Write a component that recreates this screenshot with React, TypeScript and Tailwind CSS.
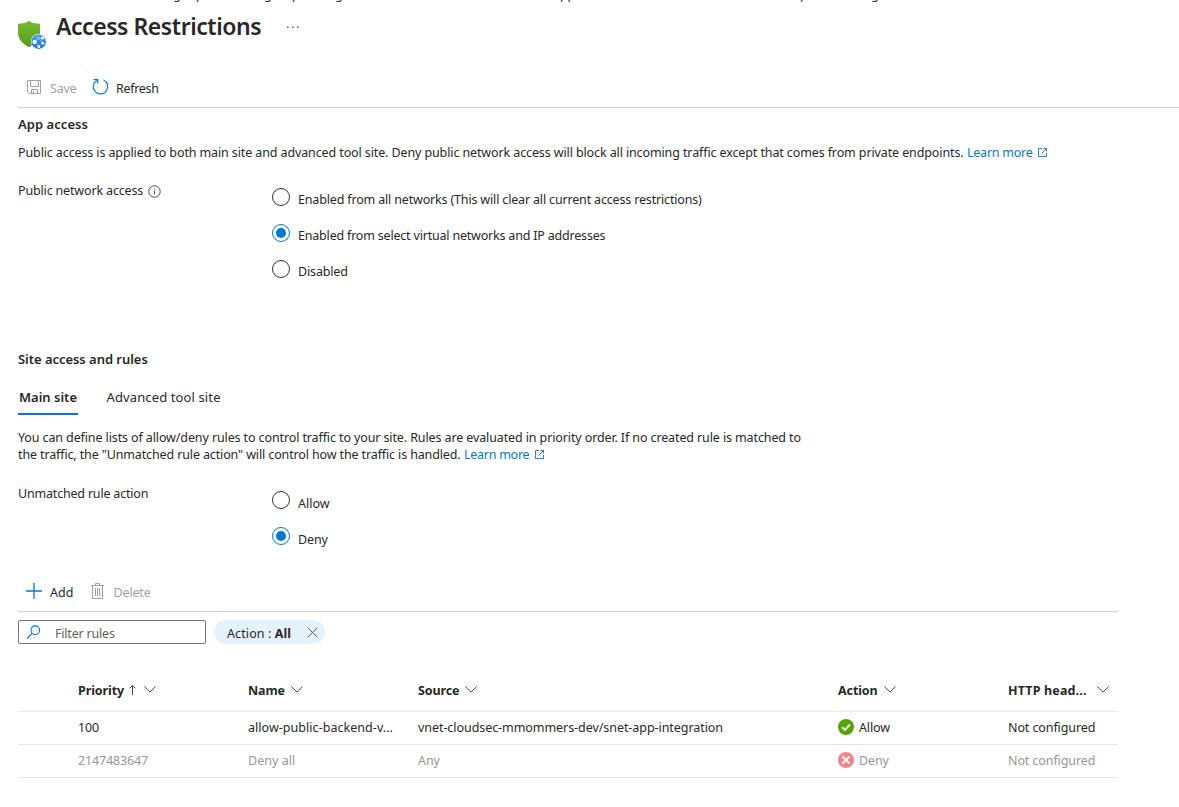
import clsx from "clsx";

const ShieldIcon = () => (
  <svg width="30" height="30" viewBox="0 0 30 30" className="shrink-0">
    <defs>
      <linearGradient id="shield" x1="0" y1="0" x2="0" y2="1">
        <stop offset="0" stopColor="#76bc2d" />
        <stop offset="1" stopColor="#5a9a22" />
      </linearGradient>
      <linearGradient id="globe" x1="0" y1="0" x2="0" y2="1">
        <stop offset="0" stopColor="#4a9de9" />
        <stop offset="1" stopColor="#1673cd" />
      </linearGradient>
    </defs>
    <path d="M11 .8C13.500 3 17.500 3.800 22 3.800V13C22 19.500 16.500 24.500 11 27.200C5.500 24.500 0 19.500 0 13V3.800C4.500 3.800 8.500 3 11 .8Z" fill="url(#shield)" />
    <circle cx="20.700" cy="21.700" r="7.700" fill="#fff" />
    <circle cx="20.700" cy="21.700" r="7.200" fill="url(#globe)" />
    <path d="M16.500 21.500L20.700 18.500L25.500 23M20.500 18.500L24.500 18M17 22.500L21.500 26.500" stroke="#a9d3f8" strokeWidth=".8" fill="none" />
    <circle cx="16.600" cy="21.900" r="2.100" fill="#fff" />
    <circle cx="24.600" cy="18" r="1.500" fill="#fff" />
    <circle cx="20" cy="17.800" r="1.200" fill="#8cc4f5" />
    <circle cx="24.700" cy="23.300" r="1.400" fill="#fff" />
    <circle cx="20.800" cy="26.400" r="1.500" fill="#fff" />
  </svg>
);

const SaveIcon = () => (
  <svg width="14" height="14" viewBox="0 0 14 14" fill="none" stroke="#a19f9d">
    <path d="M.5 .5H13.500V13.500H2.500L.5 11.500Z" />
    <path d="M3.500 .5V6.500H11.500V.5M4.500 13.500V9.500H10.500V13.500M6.500 11V13.500" />
  </svg>
);

const RefreshIcon = () => (
  <svg width="17" height="17" viewBox="0 0 18 18" fill="none" stroke="#0078d4" strokeWidth="1.200">
    <path d="M12.300 2.200A7.700 7.700 0 1 1 5.200 2.400" />
    <path d="M1.800 1.600H6V5.800" />
  </svg>
);

const InfoIcon = () => (
  <svg width="13" height="13" viewBox="0 0 13 13" fill="none" stroke="#484644">
    <circle cx="6.500" cy="6.500" r="5.700" strokeWidth="1" />
    <path d="M6.500 5.500V9.500M6.500 3.500V4.500" />
  </svg>
);

const ExternalIcon = () => (
  <svg width="9" height="9" viewBox="0 0 9 9" fill="none" stroke="#0078d4" className="shrink-0">
    <path d="M4 .5H.5V8.500H8.500V5M5.500 .5H8.500V3.500M8.500 .5L3.500 5.500" strokeWidth=".9" />
  </svg>
);

const PlusIcon = () => (
  <svg width="16" height="16" viewBox="0 0 16 16" stroke="#0078d4" strokeWidth="1.300">
    <path d="M8 0V16M0 8H16" />
  </svg>
);

const TrashIcon = () => (
  <svg width="13" height="16" viewBox="0 0 13 16" fill="none" stroke="#a19f9d">
    <path d="M0 2.500H13M4.500 2.500V.5H8.500V2.500M1.500 2.500V15.500H11.500V2.500M4.500 5V13M6.500 5V13M8.500 5V13" />
  </svg>
);

const SearchIcon = () => (
  <svg width="15" height="15" viewBox="0 0 15 15" fill="none" stroke="#0078d4" strokeWidth="1.100">
    <circle cx="9.300" cy="5.200" r="4.300" />
    <path d="M6.200 8.300L1 13.500" />
  </svg>
);

const CloseIcon = () => (
  <svg width="11" height="11" viewBox="0 0 11 11" stroke="#605e5c">
    <path d="M.5 .5L10.500 10.500M10.500 .5L.5 10.500" />
  </svg>
);

const Chevron = () => (
  <svg width="12" height="7" viewBox="0 0 12 7" fill="none" stroke="#484644" className="mb-[3px] shrink-0">
    <path d="M.4 .5L6 6.100L11.600 .5" />
  </svg>
);

const SortArrow = () => (
  <svg width="7" height="10" viewBox="0 0 7 10" fill="none" stroke="#484644" className="mb-px shrink-0">
    <path d="M3.500 .5V10M.8 3.200L3.500 .5L6.200 3.200" />
  </svg>
);

const StatusIcon = ({ ok }: { ok: boolean }) => (
  <svg width="16" height="16" viewBox="0 0 16 16" fill="none" stroke="#fff" strokeWidth="1.900">
    <circle cx="8" cy="8" r="8" fill={ok ? "#57a300" : "#f1858d"} stroke="none" />
    {ok ? <path d="M4 8.200L6.900 11L12 5.500" /> : <path d="M4.500 4.500L11.500 11.500M11.500 4.500L4.500 11.500" />}
  </svg>
);

type RadioProps = { label: string; checked?: boolean; className?: string };

const Radio = ({ label, checked, className }: RadioProps) => (
  <div className="flex h-[18px] items-start gap-2">
    <span
      className={clsx(
        "flex size-[18px] shrink-0 items-center justify-center rounded-full border",
        checked ? "border-[#0078d4]" : "border-[#323130]"
      )}
    >
      {checked && <span className="size-[10px] rounded-full bg-[#0078d4]" />}
    </span>
    <span className={className}>{label}</span>
  </div>
);

const grid = "grid grid-cols-[60px_170px_170px_420px_170px_110px]";

const rules = [
  { priority: "100", name: "allow-public-backend-v...", source: "vnet-cloudsec-mmommers-dev/snet-app-integration", action: "Allow", header: "Not configured" },
  { priority: "2147483647", name: "Deny all", source: "Any", action: "Deny", header: "Not configured" },
];

const App = () => {
  return (
    <div className="h-[807px] w-[1179px] overflow-hidden bg-white pl-[18px] font-['Noto_Sans','Open_Sans',sans-serif] text-[12.5px] leading-[19px] tracking-[-0.15px] text-[#292827]">
      {/* BREADCRUMB, scrolled almost out of view */}
      <div className="flex h-[3px] items-end overflow-hidden pl-[155px] leading-[16px] whitespace-nowrap">
        <span className="w-[23px]">g</span>
        <span className="w-[68px]">p</span>
        <span className="w-[28px]">g</span>
        <span className="w-[43px]">p</span>
        <span className="w-[225px]">g</span>
        <span className="w-[240px]">pp</span>
        <span className="w-[71px]">p</span>
        <span>g</span>
      </div>

      {/* TITLE */}
      <div className="flex h-[72px] items-start">
        <div className="pt-[17px]">
          <ShieldIcon />
        </div>
        <h1 className="ml-2 pt-[7px] text-[23px] leading-[32px] font-semibold tracking-[-0.45px]">Access Restrictions</h1>
        <svg width="12" height="2" viewBox="0 0 12 2" fill="#605e5c" className="mt-[23px] ml-[26px]">
          <path d="M0 .5H1.500V2H0ZM5 .5H6.500V2H5ZM10 .5H11.500V2H10Z" />
        </svg>
      </div>

      {/* COMMANDS */}
      <div className="flex h-[33px] items-start border-b border-[#d2d0ce] pl-[9px]">
        <div className="flex w-[65px] items-start gap-[9px] pt-1 text-[#a19f9d]">
          <div className="pt-px"><SaveIcon /></div>
          <span>Save</span>
        </div>
        <div className="flex items-start gap-[7px] pt-[3px]">
          <RefreshIcon />
          <span className="pt-px tracking-[-0.3px]">Refresh</span>
        </div>
      </div>

      {/* APP ACCESS */}
      <h2 className="mt-[7px] text-[13px] leading-[18px] font-semibold tracking-[0.05px]">App access</h2>
      <p className="mt-[10px] flex items-center whitespace-nowrap">
        <span className="tracking-[-0.115px]">
          Public access is applied to both main site and advanced tool site. Deny public network access will block all incoming traffic except that comes from private endpoints.
        </span>
        <a className="mr-[6px] ml-[3.5px] tracking-[-0.25px] text-[#0078d4]">Learn more</a>
        <ExternalIcon />
      </p>
      <div className="mt-[19px] flex h-[97px]">
        <div className="flex w-[254px] items-start">
          <span className="tracking-[-0.16px]">Public network access</span>
          <div className="ml-[4.5px] pt-[4px]"><InfoIcon /></div>
        </div>
        <div className="flex flex-col gap-[18px] pt-[7px]">
          <Radio label="Enabled from all networks (This will clear all current access restrictions)" className="pt-[2px] tracking-[-0.165px]" />
          <Radio label="Enabled from select virtual networks and IP addresses" checked className="pt-[2px] tracking-[-0.195px]" />
          <Radio label="Disabled" className="pt-[2px]" />
        </div>
      </div>

      {/* SITE ACCESS */}
      <h2 className="mt-[72px] text-[13px] leading-[18px] font-semibold tracking-[-0.04px]">Site access and rules</h2>
      <div className="mt-5 flex gap-[28.5px] text-[13px] leading-[18px]">
        <div className="h-[27px] w-[60px] border-b-2 border-[#0078d4] text-center font-semibold tracking-[0px]">Main site</div>
        <div className="tracking-[0.12px]">Advanced tool site</div>
      </div>
      <div className="mt-[14px] leading-[17px] whitespace-nowrap">
        <p className="tracking-[-0.115px]">
          You can define lists of allow/deny rules to control traffic to your site. Rules are evaluated in priority order. If no created rule is matched to
        </p>
        <p className="flex items-center">
          <span className="tracking-[-0.13px]">the traffic, the "Unmatched rule action" will control how the traffic is handled.</span>
          <a className="mr-[6px] ml-[3.5px] tracking-[-0.27px] text-[#0078d4]">Learn more</a>
          <ExternalIcon />
        </p>
      </div>
      <div className="mt-[21px] flex h-[61px]">
        <div className="w-[254px] tracking-[-0.19px]">Unmatched rule action</div>
        <div className="flex flex-col gap-[18px] pt-[7px]">
          <Radio label="Allow" className="pt-[3px] tracking-[0px]" />
          <Radio label="Deny" checked className="pt-[3px]" />
        </div>
      </div>

      {/* RULES */}
      <div className="w-[1100px]">
        <div className="mt-[38px] flex h-[29px] items-start border-b border-[#d2d0ce] pl-2">
          <PlusIcon />
          <span className="ml-2 w-[41px] tracking-[0px]">Add</span>
          <TrashIcon />
          <span className="ml-[9.5px] text-[#a19f9d]">Delete</span>
        </div>
        <div className="mt-2 flex gap-2">
          <div className="flex h-6 w-[188px] items-start rounded-[2px] border border-[#7a7876] pl-[7px]">
            <div className="pt-[4px]"><SearchIcon /></div>
            <span className="ml-[14px] pt-[3px] tracking-[-0.2px] text-[#605e5c]">Filter rules</span>
          </div>
          <div className="flex h-6 w-[111px] items-start rounded-full bg-[#e5f1fb] pt-[4px] pl-[13px]">
            <span className="w-[80px] tracking-[0.1px]">Action : <b>All</b></span>
            <div className="pt-[3px]"><CloseIcon /></div>
          </div>
        </div>

        <div className={clsx(grid, "mt-[37px] h-[31px] border-b border-[#edebe9] font-bold tracking-[-0.1px]")}>
          <div />
          <div className="flex h-[19px] items-center">
            Priority
            <span className="ml-[5px]"><SortArrow /></span>
            <span className="ml-2"><Chevron /></span>
          </div>
          <div className="flex h-[19px] items-center gap-[6px]">Name<Chevron /></div>
          <div className="flex h-[19px] items-center gap-[6px]">Source<Chevron /></div>
          <div className="flex h-[19px] items-center gap-[6px]">Action<Chevron /></div>
          <div className="flex h-[19px] items-center justify-between pr-[9px]">
            <span className="tracking-[0.15px]">HTTP head...</span>
            <Chevron />
          </div>
        </div>
        {rules.map((rule) => (
          <div
            key={rule.priority}
            className={clsx(grid, "h-[33px] border-b border-[#e6e4e2] pt-[6px]", rule.action === "Deny" && "text-[#979593]")}
          >
            <div />
            <div>{rule.priority}</div>
            <div className="tracking-[0.04px]">{rule.name}</div>
            <div className="tracking-[-0.06px]">{rule.source}</div>
            <div className="flex items-start gap-[5px]">
              <div className="pt-px"><StatusIcon ok={rule.action === "Allow"} /></div>
              {rule.action}
            </div>
            <div className="tracking-[-0.1px]">{rule.header}</div>
          </div>
        ))}
      </div>
    </div>
  );
};

export default App;
